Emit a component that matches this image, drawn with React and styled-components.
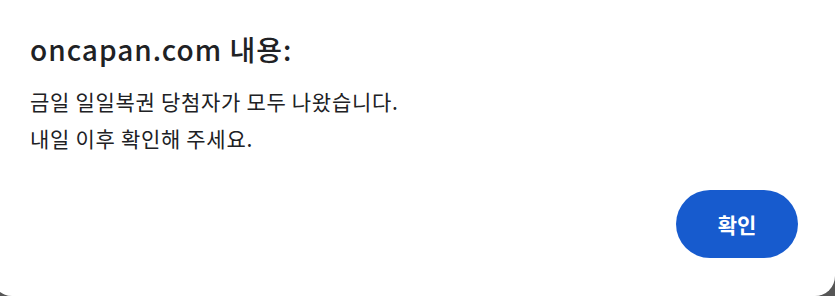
import React from "react";
import styled, { createGlobalStyle } from "styled-components";

const GlobalStyle = createGlobalStyle`
  html, body {
    margin: 0;
    padding: 0;
    background: #565656;
    overflow: hidden;
  }
  body {
    font-family: "Noto Sans CJK KR", "Noto Sans", sans-serif;
  }
`;

const Dialog = styled.div`
  box-sizing: border-box;
  width: 843px;
  height: 296px;
  margin-left: -8px;
  padding: 30px 37px 0 38px;
  background: #fff;
  border-radius: 0 0 20px 20px;
  display: flex;
  flex-direction: column;
`;

const Title = styled.h1`
  margin: 0;
  font-size: 28px;
  font-weight: 500;
  letter-spacing: 1px;
  line-height: 38px;
  color: #202124;
`;

const Message = styled.div`
  margin-top: 15px;
  font-size: 21px;
  letter-spacing: 0.7px;
  line-height: 37px;
  color: #202124;
`;

const Footer = styled.div`
  margin-top: auto;
  margin-bottom: 38px;
  display: flex;
  justify-content: flex-end;
`;

const Button = styled.button`
  width: 122px;
  height: 68px;
  border: none;
  border-radius: 34px;
  background: #175bce;
  color: #fff;
  font-family: inherit;
  font-size: 21px;
  font-weight: 700;
`;

export default function App() {
  return (
    <>
      <GlobalStyle />
      <Dialog>
        <Title>oncapan.com 내용:</Title>
        <Message>
          금일 일일복권 당첨자가 모두 나왔습니다.
          <br />
          내일 이후 확인해 주세요.
        </Message>
        <Footer>
          <Button>확인</Button>
        </Footer>
      </Dialog>
    </>
  );
}
